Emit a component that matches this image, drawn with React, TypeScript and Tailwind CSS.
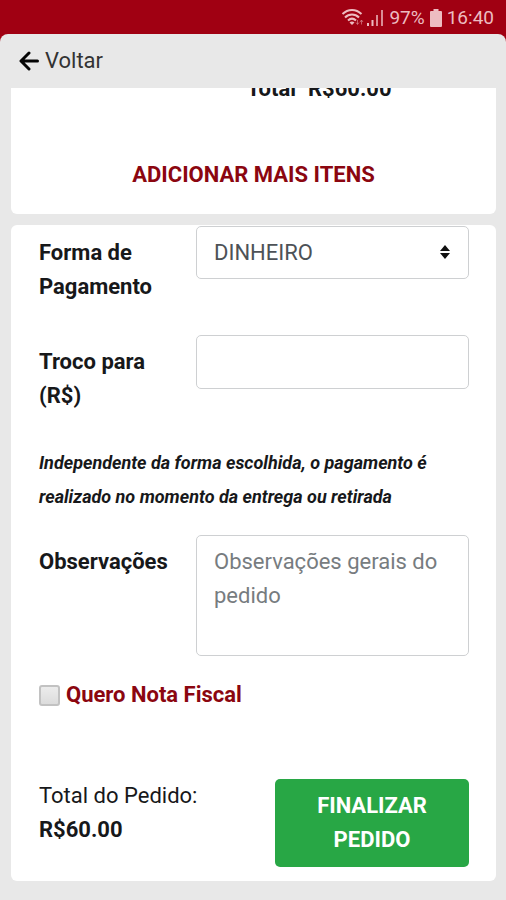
import React from "react";

const field =
  "block w-full rounded-[5px] border border-[#ced0d2] bg-white px-[17px] text-[#4d5257] outline-none";

function StatusBar() {
  return (
    <div className="flex h-[34px] items-center justify-end bg-[#a00012] pr-3 pt-[2px] text-[19px] leading-8 text-[#edbcc1]">
      <svg width="24" height="20" viewBox="0 0 24 20" fill="none" stroke="currentColor" strokeWidth="2" className="mr-[2px]" aria-hidden="true">
        <path d="M1.500 6C7 .5 15 .5 20.500 6" />
        <path d="M4 9.500c4-4 10-4 14 0" />
        <path d="M7 12.500c2.500-2.300 5.500-2.300 8 0" />
        <path d="M8.500 14.500c1.500-1.200 3.500-1.200 5 0L11 17z" fill="currentColor" stroke="none" />
        <path d="M16.500 12v4M15 14.500l1.500 2 1.500-2M20.500 16.500v-4M19 14l1.500-2 1.500 2" strokeWidth="1" opacity=".5" />
      </svg>
      <svg width="17" height="18" viewBox="0 0 17 18" fill="currentColor" className="mr-[5px]" aria-hidden="true">
        <path d="M0 14h2v3H0zM4.500 11h2v6h-2z" />
        <path d="M9 6h2v11H9zM14 1h2v16h-2z" opacity=".75" />
      </svg>
      <span>97%</span>
      <svg width="12" height="18" viewBox="0 0 12 18" fill="currentColor" className="mx-[5px]" aria-hidden="true">
        <path d="M3.500 0h5v2H11q1 0 1 1v14q0 1-1 1H1q-1 0-1-1V3q0-1 1-1h2.500z" />
      </svg>
      <span>16:40</span>
    </div>
  );
}

function Row({ id, label, children }: { id: string; label: string; children: React.ReactNode }) {
  return (
    <div className="grid grid-cols-[157px_1fr] items-start">
      <label htmlFor={id} className="pt-[10px] pr-6 font-bold">
        {label}
      </label>
      {children}
    </div>
  );
}

export default function App() {
  return (
    <div className="min-h-screen bg-[#a00012] font-['Roboto',sans-serif] text-[22px] leading-[34px] text-[#17181a]">
      <StatusBar />
      <main className="min-h-[calc(100vh-34px)] rounded-t-lg bg-[#e8e8e8] pr-[10px] pb-[19px] pl-[11px]">
        <header className="flex h-[54px] items-center px-2">
          <button type="button" className="flex items-center gap-[6px] text-[#333]">
            <svg width="20" height="20" viewBox="0 0 20 20" fill="none" stroke="#050505" strokeWidth="3" strokeLinecap="round" strokeLinejoin="round" aria-hidden="true">
              <path d="M10 2L2 10l8 8M2.500 10H18.500" />
            </svg>
            Voltar
          </button>
        </header>

        <section className="flex flex-col overflow-hidden rounded-b-md bg-white pb-[22px]">
          <div className="-mt-4 grid grid-cols-[285px_1fr] gap-3 font-bold">
            <span className="text-right">Total</span>
            <span>R$60.00</span>
          </div>
          <button type="button" className="mt-[52px] self-center font-bold text-[#8b0610]">
            ADICIONAR MAIS ITENS
          </button>
        </section>

        <form className="mt-[11px] rounded-md bg-white pt-px pr-[27px] pb-[14px] pl-7" onSubmit={(e) => e.preventDefault()}>
          <div className="flex flex-col gap-[31px]">
            <Row id="pagamento" label="Forma de Pagamento">
              <div className="relative">
                <select id="pagamento" className={`${field} h-[53px] appearance-none`}>
                  <option>DINHEIRO</option>
                </select>
                <svg className="pointer-events-none absolute top-[19px] right-[19px]" width="10" height="14" viewBox="0 0 10 14" fill="#111" aria-hidden="true">
                  <path d="M5 0l5 6H0zM0 8h10l-5 6z" />
                </svg>
              </div>
            </Row>
            <Row id="troco" label="Troco para (R$)">
              <input id="troco" type="text" className={`${field} h-[54px]`} />
            </Row>
          </div>
          <p className="mt-[33px] mb-[21px] text-[18px] font-bold italic">
            Independente da forma escolhida, o pagamento é realizado no momento da entrega ou retirada
          </p>
          <Row id="observacoes" label="Observações">
            <textarea
              id="observacoes"
              placeholder="Observações gerais do pedido"
              className={`${field} h-[121px] resize-none overflow-hidden py-[9px] placeholder:text-[#777c80]`}
            />
          </Row>
          <label className="mt-[22px] flex items-center gap-[6px] font-bold text-[#8b0610]">
            <input
              type="checkbox"
              className="size-[21px] appearance-none rounded-[3px] border-2 border-[#c2c2c2] bg-linear-to-b from-[#ececec] to-[#dcdcdc] checked:bg-[#8b0610]"
            />
            Quero Nota Fiscal
          </label>
          <div className="mt-[67px] flex items-start justify-between">
            <div>
              <div>Total do Pedido:</div>
              <div className="font-bold">R$60.00</div>
            </div>
            <button type="submit" className="w-[194px] rounded-[5px] bg-[#28a745] px-8 py-[10px] text-center font-bold text-white">
              FINALIZAR PEDIDO
            </button>
          </div>
        </form>
      </main>
    </div>
  );
}
